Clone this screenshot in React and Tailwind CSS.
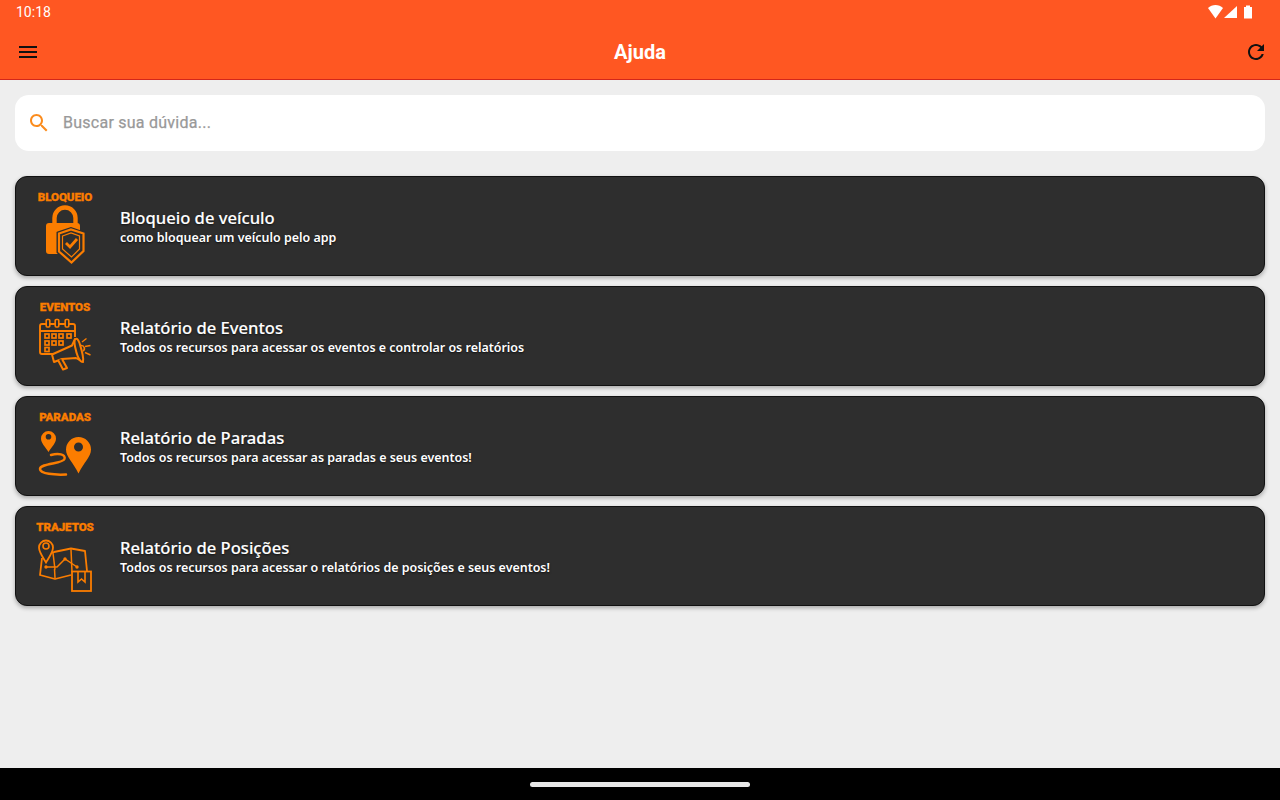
import React from "react";

const ORANGE = "#fb7d00";

function LockIcon() {
  return (
    <svg viewBox="0 20 80 60" className="w-[80px] h-[60px]">
      <path d="M29.5 40V33a10.5 10.5 0 0 1 21 0v7" fill="none" stroke={ORANGE} strokeWidth="4.4" />
      <rect x="21" y="38" width="34" height="31" rx="3" fill={ORANGE} />
      <path d="M33 48L46 43.5L59 48V66L46.5 79L33 67Z" fill="#2e2e2e" stroke="#2e2e2e" strokeWidth="3" />
      <path d="M34 48.5L46 44.5L58.5 48.5V66L46.5 77.5L34 66.5Z" fill="#2e2e2e" stroke={ORANGE} strokeWidth="2.2" />
      <path d="M37.5 51L46 48L54.5 51V64L46.5 72L37.5 64Z" fill="none" stroke={ORANGE} strokeWidth="1.2" />
      <path d="M41 58L45 62L52 54" fill="none" stroke={ORANGE} strokeWidth="2.8" />
    </svg>
  );
}

function CalendarIcon() {
  const xs = [20, 27, 34, 42];
  const ys = [39, 46, 52.5];
  return (
    <svg viewBox="0 20 80 60" className="w-[80px] h-[60px]">
      <path d="M30 59H17a2 2 0 0 1-2-2V31a2 2 0 0 1 2-2h31a2 2 0 0 1 2 2v11" fill="none" stroke={ORANGE} strokeWidth="1.9" />
      <path d="M15 36H50" stroke={ORANGE} strokeWidth="1.9" />
      {[23, 32, 42].map((x) => (
        <rect key={x} x={x - 1.8} y="24.5" width="3.6" height="7.5" rx="1" fill="#2e2e2e" stroke={ORANGE} strokeWidth="1.6" />
      ))}
      {ys.map((y, r) =>
        xs.map((x, c) =>
          (r === 2 && c > 0) || (r === 1 && c === 3) ? null : (
            <rect key={`${x}-${y}`} x={x} y={y} width="4" height="4" fill="none" stroke={ORANGE} strokeWidth="1.7" />
          )
        )
      )}
      <path d="M27 59.5L47 50.5L50 44L58 67L51 63L37 64L29 67Z" fill="#2e2e2e" stroke={ORANGE} strokeWidth="2" strokeLinejoin="round" />
      <path d="M50 44.5C52 43 53 44 54.5 48C56 53 59 62 58 66C57 68 55 66 53 62C51 57 48.5 47 50 44.5Z" fill="#2e2e2e" stroke={ORANGE} strokeWidth="2" />
      <path d="M33 65L38 74.5L42 73L37 64" fill="#2e2e2e" stroke={ORANGE} strokeWidth="2" strokeLinejoin="round" />
      <path d="M56 50.5a3 3 0 0 1 2 5.5" fill="none" stroke={ORANGE} strokeWidth="1.6" />
      <path d="M57 47L61.5 43.5M60 51.5L65.5 50.5M60 57.5L65.5 60" stroke={ORANGE} strokeWidth="1.4" />
    </svg>
  );
}

function PinsIcon() {
  return (
    <svg viewBox="0 20 80 60" className="w-[80px] h-[60px]">
      <path fillRule="evenodd" d="M23.5 47C20 41.5 16 38 16 33.5a7.5 7.5 0 0 1 15 0C31 38 27 41.5 23.5 47ZM23.5 29a2.8 2.8 0 1 0 0 5.6a2.8 2.8 0 0 0 0-5.6Z" fill={ORANGE} />
      <path fillRule="evenodd" d="M53.5 68.5C48 57 41 52 41 44.5a12.5 12.5 0 0 1 25 0C66 52 59 57 53.5 68.5ZM53.5 37.5a4.5 4.5 0 1 0 0 9a4.5 4.5 0 0 0 0-9Z" fill={ORANGE} />
      <path d="M26 50C33 48 41 49 39.5 54C38 59 15 58 15 64C15 69 30 70 41 69.5" fill="none" stroke={ORANGE} strokeWidth="2.5" strokeLinecap="round" />
    </svg>
  );
}

function MapIcon() {
  return (
    <svg viewBox="0 20 80 60" className="w-[80px] h-[60px]">
      <path d="M28 38L30 54.5M46 34.5L47 57M30 63L29.5 54" fill="none" stroke={ORANGE} strokeWidth="1.5" />
      <path d="M17 43L15 60L30 64L46 60M26 38L29 37L46 33.5L60 36L62 56" fill="none" stroke={ORANGE} strokeWidth="1.8" strokeLinejoin="round" />
      <path d="M21 47.5C17 41 14 37 14 32.5a7 7 0 0 1 14 0C28 37 25 41 21 47.5Z" fill="#2e2e2e" stroke={ORANGE} strokeWidth="1.8" />
      <circle cx="21" cy="31" r="3" fill="none" stroke={ORANGE} strokeWidth="1.6" />
      <path d="M21 52L32 52L40 44L52 52" fill="none" stroke={ORANGE} strokeWidth="1.4" />
      <circle cx="21" cy="52" r="1.7" fill={ORANGE} />
      <circle cx="40" cy="44" r="1.7" fill={ORANGE} />
      <circle cx="52" cy="52" r="1.7" fill={ORANGE} />
      <rect x="47" y="56.5" width="19" height="19.5" fill="#2e2e2e" stroke={ORANGE} strokeWidth="1.8" />
      <path d="M53 57V67L56.5 64L60 67V57" fill="none" stroke={ORANGE} strokeWidth="1.6" />
    </svg>
  );
}

const itens = [
  { label: "BLOQUEIO", icon: <LockIcon />, titulo: "Bloqueio de veículo", sub: "como bloquear um veículo pelo app" },
  { label: "EVENTOS", icon: <CalendarIcon />, titulo: "Relatório de Eventos", sub: "Todos os recursos para acessar os eventos e controlar os relatórios" },
  { label: "PARADAS", icon: <PinsIcon />, titulo: "Relatório de Paradas", sub: "Todos os recursos para acessar as paradas e seus eventos!" },
  { label: "TRAJETOS", icon: <MapIcon />, titulo: "Relatório de Posições", sub: "Todos os recursos para acessar o relatórios de posições e seus eventos!" },
];

export default function App() {
  return (
    <div className="h-screen flex flex-col bg-[#eeeeee] font-['Roboto',sans-serif] overflow-hidden">
      {/* Barra de status */}
      <div className="h-6 bg-[#ff5722] flex items-center justify-between pl-4 pr-[27px] text-white text-[14px]">
        <span>10:18</span>
        <svg viewBox="0 0 45 14" className="w-[45px] h-[14px]">
          <path d="M0 3C4-1 11-1 15 3L7.5 13.5Z" fill="#fff" />
          <path d="M29 1V13H16Z" fill="#fff" />
          <path d="M36 2H38V0.5H42V2H44V13.5H36Z" fill="#fff" />
        </svg>
      </div>

      {/* Toolbar */}
      <div className="h-[56px] bg-[#ff5722] border-b border-[#d3261b] flex items-center justify-between px-4">
        <svg viewBox="0 0 24 24" className="w-6 h-6 -mr-1" fill="#111">
          <path d="M3 18h18v-2H3v2zm0-5h18v-2H3v2zm0-7v2h18V6H3z" />
        </svg>
        <span className="text-white text-[20px] font-bold">Ajuda</span>
        <svg viewBox="0 0 24 24" className="w-6 h-6 -mr-1" fill="#111">
          <path d="M17.65 6.35C16.2 4.9 14.21 4 12 4c-4.42 0-7.99 3.58-7.99 8s3.57 8 7.99 8c3.73 0 6.84-2.55 7.73-6h-2.08c-.82 2.33-3.04 4-5.65 4-3.31 0-6-2.69-6-6s2.69-6 6-6c1.66 0 3.14.69 4.22 1.78L13 11h7V4l-2.35 2.35z" />
        </svg>
      </div>

      {/* Conteúdo */}
      <div className="flex-1 px-[15px] pt-[15px]">
        <div className="h-[56px] bg-white rounded-[14px] flex items-center pl-3 gap-3 mb-[25px]">
          <svg viewBox="0 0 24 24" className="w-6 h-6" fill="#fb8c1e">
            <path d="M15.5 14h-.79l-.28-.27C15.41 12.59 16 11.11 16 9.5 16 5.91 13.09 3 9.5 3S3 5.91 3 9.5 5.91 16 9.5 16c1.61 0 3.09-.59 4.23-1.57l.27.28v.79l5 4.99L20.49 19l-4.99-5zm-6 0C7.01 14 5 11.99 5 9.5S7.01 5 9.5 5 14 7.01 14 9.5 11.99 14 9.5 14z" />
          </svg>
          <span className="text-[16px] text-[#999999] tracking-[0.25px] [-webkit-text-stroke:0.25px_#999999]">Buscar sua dúvida...</span>
        </div>

        <div className="flex flex-col gap-[10px]">
          {itens.map((item) => (
            <div
              key={item.label}
              className="h-[100px] bg-[#2e2e2e] border border-[#111] rounded-[12px] shadow-[0_2px_4px_rgba(0,0,0,0.3)] flex items-center pl-[9px]"
            >
              <div className="w-[80px] h-[98px] flex flex-col items-center pt-[13px] shrink-0">
                <span className="text-[11.6px] leading-[15px] font-black text-[#fb7d00] tracking-[-0.1px] h-[15px] [-webkit-text-stroke:0.3px_#fb7d00]">
                  {item.label}
                </span>
                {item.icon}
              </div>
              <div className="ml-[15px] pt-1 font-['Noto_Sans',sans-serif] text-white [text-shadow:0_1px_2px_rgba(0,0,0,0.7)]">
                <div className="text-[16.6px] leading-[20px] font-medium [-webkit-text-stroke:0.15px_#ffffff]">{item.titulo}</div>
                <div className="text-[12.45px] leading-[20px] font-semibold">{item.sub}</div>
              </div>
            </div>
          ))}
        </div>
      </div>

      {/* Barra de navegação */}
      <div className="h-8 bg-black flex items-center justify-center shrink-0">
        <div className="w-[220px] h-[5px] rounded-full bg-[#e8e8e8]"></div>
      </div>
    </div>
  );
}
